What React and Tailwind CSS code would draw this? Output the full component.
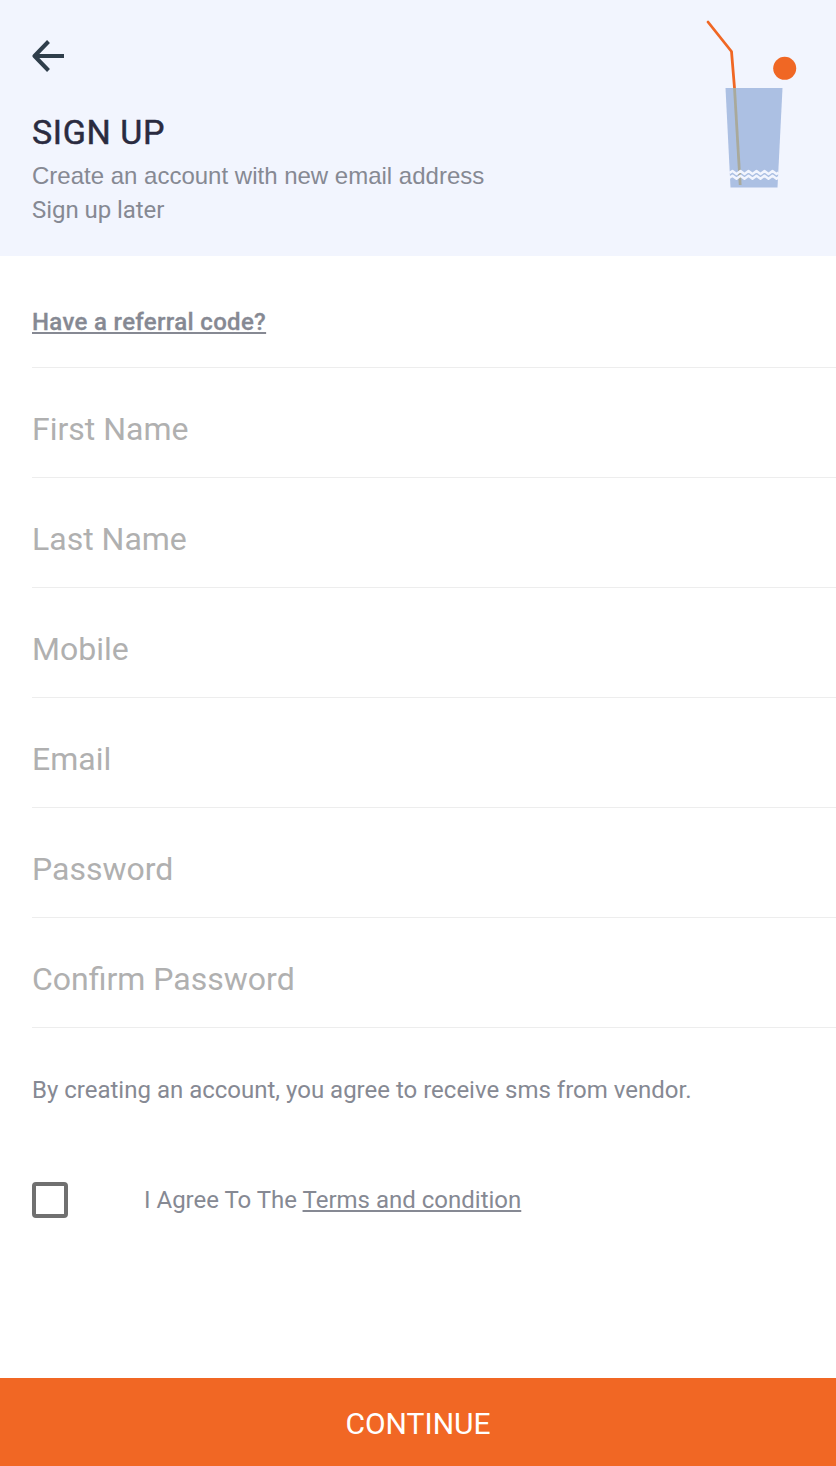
import { useState } from "react"

const fields = [
  { name: "firstName", label: "First Name", type: "text" },
  { name: "lastName", label: "Last Name", type: "text" },
  { name: "mobile", label: "Mobile", type: "tel" },
  { name: "email", label: "Email", type: "email" },
  { name: "password", label: "Password", type: "password" },
  { name: "confirmPassword", label: "Confirm Password", type: "password" },
]

const BackArrow = () => (
  <svg className="block h-8 w-8" viewBox="0 0 32 32" fill="none" stroke="#2f3e4b" strokeWidth="4">
    <path d="M32 16H3" />
    <path d="M16.5 1.5 2.5 16l14 14.5" strokeLinejoin="round" />
  </svg>
)

const DrinkLogo = () => (
  <svg className="block h-[170px] w-[92px]" viewBox="0 0 92 170" fill="none">
    <path d="M3 3 26.5 32.5 29.5 69" stroke="#f06724" strokeWidth="2.8" strokeLinecap="round" strokeLinejoin="round" />
    <circle cx="79.7" cy="49.3" r="11.5" fill="#f06724" />
    <path d="M20.5 69h57l-5 99.5h-47z" fill="#acc0e3" />
    <path d="M29.5 69 35.2 166" stroke="#a9a99b" strokeWidth="2.8" />
    <path
      d="M24.5 154l3-2 4 3 4-3 4 3 4-3 4 3 4-3 4 3 4-3 4 3 4-3 4 3 2-1.5M24.5 158.7l3-2 4 3 4-3 4 3 4-3 4 3 4-3 4 3 4-3 4 3 4-3 4 3 2-1.5"
      stroke="#f2f5fe"
      strokeWidth="2.4"
      strokeLinejoin="round"
    />
  </svg>
)

const App = () => {
  const [values, setValues] = useState({})
  const [agreed, setAgreed] = useState(false)

  const handleChange = (e) => {
    setValues({ ...values, [e.target.name]: e.target.value })
  }

  return (
    <div className="flex min-h-screen flex-col bg-white font-[Roboto,sans-serif] text-2xl text-[#868993]">
      {/* Header */}
      <header className="flex h-64 justify-between bg-[#f2f5fe] pl-8">
        <div className="pt-10">
          <button className="block" aria-label="Back">
            <BackArrow />
          </button>
          <h1 className="mt-10 text-[34px] leading-10 font-normal tracking-[0.6px] text-[#2a2b40] [-webkit-text-stroke:0.5px_#2a2b40]">
            SIGN UP
          </h1>
          <p className="mt-[7px] font-['Liberation_Sans',sans-serif] leading-[34px]">
            Create an account with new email address
          </p>
          <p className="leading-[34px] tracking-[-0.05px]">Sign up later</p>
        </div>
        <div className="pt-[19px] pr-[39px]">
          <DrinkLogo />
        </div>
      </header>

      {/* Form */}
      <form className="flex grow flex-col">
        <div className="ml-8 flex h-28 items-center border-b border-[#ededed] pt-5">
          <button type="button" className="font-medium tracking-[0.33px] underline [-webkit-text-stroke:0.3px_#868993]">
            Have a referral code?
          </button>
        </div>

        {fields.map((field) => (
          <div key={field.name} className="ml-8 flex h-[110px] items-center border-b border-[#ededed] pt-3">
            <input
              name={field.name}
              type={field.type}
              value={values[field.name] || ""}
              onChange={handleChange}
              placeholder={field.label}
              className="w-full text-[32px] leading-10 outline-none placeholder:text-[#b0b0b0]"
            />
          </div>
        ))}

        <p className="mt-[46px] ml-8 leading-8">By creating an account, you agree to receive sms from vendor.</p>

        <div className="mt-19 ml-8 flex items-center">
          <input
            type="checkbox"
            checked={agreed}
            onChange={(e) => setAgreed(e.target.checked)}
            className="h-9 w-9 appearance-none rounded border-4 border-[#707070] checked:bg-[#f06724]"
          />
          <p className="ml-[76px]">
            I Agree To The <a className="underline">Terms and condition</a>
          </p>
        </div>

        <button type="button" className="mt-auto h-22 bg-[#f16724] pt-[3px] text-[30px] text-white">
          CONTINUE
        </button>
      </form>
    </div>
  )
}

export default App
